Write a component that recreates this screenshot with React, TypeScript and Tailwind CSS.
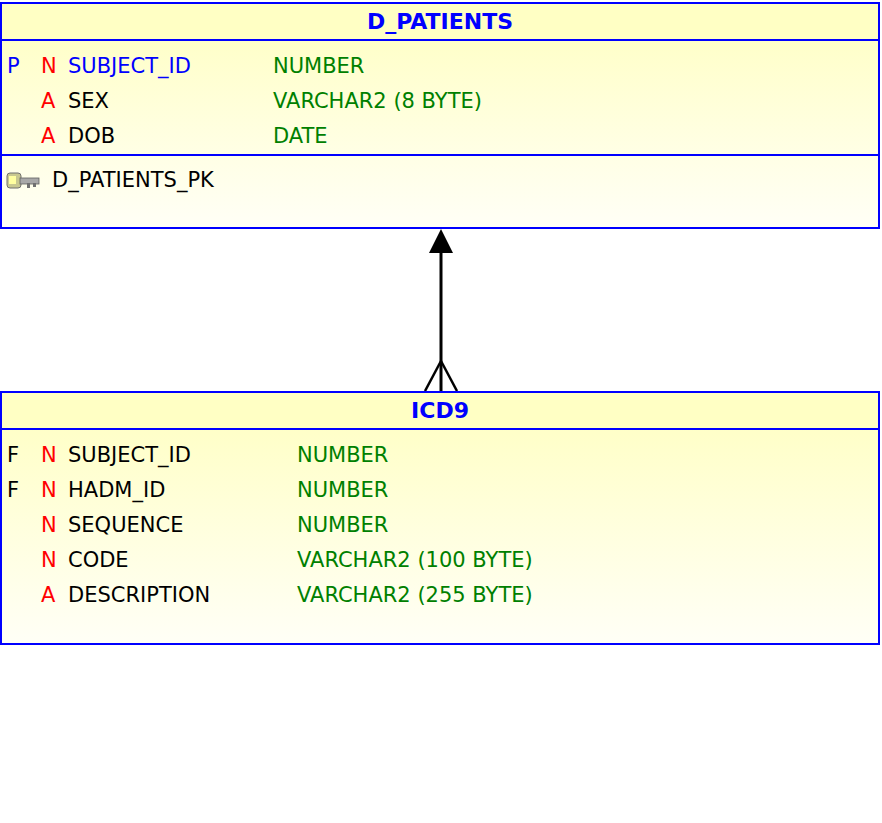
import React from "react";

const F = { fontFamily: '"DejaVu Sans", Verdana, sans-serif' };

type Row = { k?: string; kc?: string; n: string; name: string; nameBlue?: boolean; type: string };

function Table({ title, rows, typeX, footer, bodyH }: { title: string; rows: Row[]; typeX: number; footer?: boolean; bodyH: number }) {
  return (
    <div className="w-[880px] border-2 border-[#0000ff] bg-gradient-to-b from-[#ffffc0] to-[#fffff6]" style={{ ...F, fontSize: 21, lineHeight: "35px" }}>
      <div className="h-[37px] border-b-2 border-[#0000ff] flex items-center justify-center font-bold text-[#0000ff] bg-[#ffffc4]" style={{ fontSize: 22 }}>{title}</div>
      <div className="pt-[8px]" style={{ height: bodyH }}>
        {rows.map((r, i) => (
          <div key={i} className="flex h-[35px] items-center whitespace-nowrap">
            <span className={`w-[34px] pl-[5px] ${r.kc ?? "text-black"}`}>{r.k ?? ""}</span>
            <span className="w-[32px] pl-[5px] text-[#ff0000]">{r.n}</span>
            <span className={`${r.nameBlue ? "text-[#0000ff]" : "text-black"}`} style={{ width: typeX - 67 }}>{r.name}</span>
            <span className="text-[#008000]">{r.type}</span>
          </div>
        ))}
      </div>
      {footer && (
        <div className="border-t-2 border-[#0000ff] h-[73px] pt-[7px] flex items-start">
          <div className="flex items-center h-[35px] gap-[12px] pl-[4px]">
            <svg width="34" height="22" viewBox="0 0 34 22">
              <rect x="1" y="3" width="14" height="15" rx="3" fill="#c8c890" stroke="#707070" />
              <rect x="3" y="6" width="7" height="8" fill="#ffffa0" />
              <rect x="14" y="8" width="19" height="6" fill="#a8a8a8" stroke="#606060" strokeWidth="0.8" />
              <rect x="21" y="13" width="3" height="5" fill="#707070" />
              <rect x="27" y="13" width="3" height="4" fill="#707070" />
            </svg>
            <span className="text-black">D_PATIENTS_PK</span>
          </div>
        </div>
      )}
    </div>
  );
}

export default function App() {
  return (
    <div className="w-[882px] h-[823px] bg-white pt-[2px]">
      <Table
        title="D_PATIENTS"
        typeX={272}
        bodyH={113}
        footer
        rows={[
          { k: "P", kc: "text-[#0000ff]", n: "N", name: "SUBJECT_ID", nameBlue: true, type: "NUMBER" },
          { n: "A", name: "SEX", type: "VARCHAR2 (8 BYTE)" },
          { n: "A", name: "DOB", type: "DATE" },
        ]}
      />
      <svg width="882" height="162" className="block">
        <polygon points="441,0 429,24 453,24" fill="#000" />
        <line x1="441" y1="20" x2="441" y2="162" stroke="#000" strokeWidth="3" />
        <line x1="441" y1="132" x2="425" y2="162" stroke="#000" strokeWidth="2.5" />
        <line x1="441" y1="132" x2="457" y2="162" stroke="#000" strokeWidth="2.5" />
      </svg>
      <Table
        title="ICD9"
        typeX={296}
        bodyH={213}
        rows={[
          { k: "F", n: "N", name: "SUBJECT_ID", type: "NUMBER" },
          { k: "F", n: "N", name: "HADM_ID", type: "NUMBER" },
          { n: "N", name: "SEQUENCE", type: "NUMBER" },
          { n: "N", name: "CODE", type: "VARCHAR2 (100 BYTE)" },
          { n: "A", name: "DESCRIPTION", type: "VARCHAR2 (255 BYTE)" },
        ]}
      />
    </div>
  );
}
